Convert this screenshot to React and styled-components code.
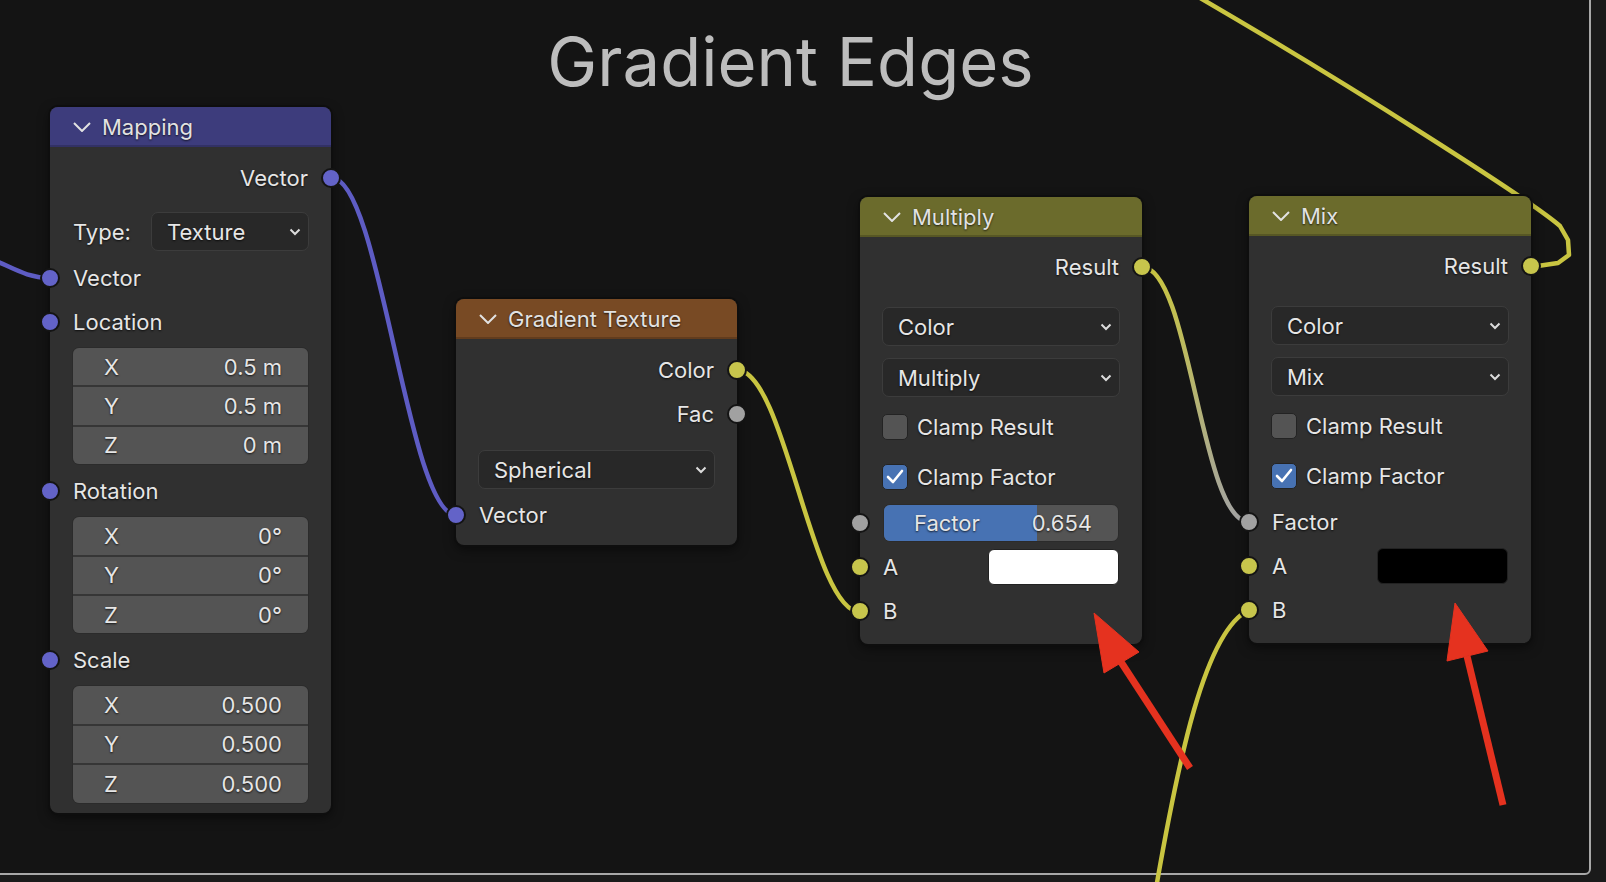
import React from 'react';
import styled, { createGlobalStyle } from 'styled-components';

const GlobalStyle = createGlobalStyle`
  html, body {
    margin: 0;
    padding: 0;
    background: #1a1a1a;
  }
  body {
    font-family: Inter, "Noto Sans", "Liberation Sans", sans-serif;
    overflow: hidden;
  }
`;

const Canvas = styled.div`
  position: relative;
  width: 1606px;
  height: 882px;
  overflow: hidden;
  background: #1a1a1a;
`;

// frame node, only its right and bottom edges are on screen
const Frame = styled.div`
  position: absolute;
  left: -4px;
  top: -4px;
  width: 1595px;
  height: 879px;
  box-sizing: border-box;
  border: 2px solid #a8a8a8;
  border-radius: 0 0 6px 0;
  background: #141414;
`;

const FrameLabel = styled.div`
  padding-top: 30px;
  padding-right: 6px;
  text-align: center;
  font-size: 67px;
  line-height: 1;
  color: #bdbdbd;
`;

const Layer = styled.svg`
  position: absolute;
  left: 0;
  top: 0;
  width: 1606px;
  height: 882px;
  pointer-events: none;
  z-index: ${p => p.$z};
`;

const NodeBox = styled.div`
  position: absolute;
  left: ${p => p.$x}px;
  top: ${p => p.$y}px;
  width: ${p => p.$w}px;
  z-index: 2;
  background: #303030;
  border-radius: 8px;
  box-shadow: 0 0 0 2px #0e0e0e, 0 4px 12px rgba(0, 0, 0, 0.55);
  color: #e6e6e6;
  font-size: 22px;
  text-shadow: 0 1px 2px rgba(0, 0, 0, 0.75);
`;

const Header = styled.div`
  height: 40px;
  display: flex;
  align-items: center;
  gap: 11px;
  padding-left: 23px;
  background: ${p => p.$color};
  border-radius: 8px 8px 0 0;
  box-shadow: inset 0 -2px 0 rgba(0, 0, 0, 0.18);
  color: #e2e2e2;
`;

const Body = styled.div`
  display: flex;
  flex-direction: column;
  padding: ${p => p.$pt}px 22px ${p => p.$pb}px;
`;

const SocketRow = styled.div`
  position: relative;
  height: 44px;
  flex: none;
  margin-top: ${p => p.$mt || 0}px;
  display: flex;
  align-items: center;
  gap: 12px;
  justify-content: ${p => (p.$out ? 'flex-end' : 'space-between')};
  padding: 0 1px;
`;

const Socket = styled.span`
  position: absolute;
  top: 50%;
  ${p => (p.$out ? 'right: -32px;' : 'left: -32px;')}
  width: 16px;
  height: 16px;
  border-radius: 50%;
  background: ${p => p.$color};
  border: 2px solid #141414;
  transform: translateY(-50%);
`;

const TypeRow = styled.div`
  display: flex;
  align-items: center;
  margin: 12px 0 5px;
  padding-left: 1px;
`;

const TypeLabel = styled.span`
  width: 78px;
  flex: none;
`;

const Dropdown = styled.div`
  flex: ${p => (p.$grow ? '1 1 auto' : 'none')};
  height: 39px;
  box-sizing: border-box;
  margin-top: ${p => p.$mt || 0}px;
  display: flex;
  align-items: center;
  justify-content: space-between;
  padding: 0 7px 0 15px;
  background: #282828;
  border: 1px solid #3c3c3c;
  border-radius: 7px;
`;

const VecBox = styled.div`
  flex: none;
  margin-top: 3px;
  display: flex;
  flex-direction: column;
  gap: 2px;
  background: #363636;
  border: 1px solid #2b2b2b;
  border-radius: 7px;
  overflow: hidden;
`;

const VecField = styled.div`
  height: 37.4px;
  display: flex;
  align-items: center;
  justify-content: space-between;
  padding: 0 26px 0 31px;
  background: #545454;
`;

const CheckRow = styled.div`
  flex: none;
  height: 48px;
  margin-top: ${p => p.$mt}px;
  display: flex;
  align-items: center;
  gap: 9px;
`;

const CheckBox = styled.span`
  width: 26px;
  height: 26px;
  box-sizing: border-box;
  display: flex;
  align-items: center;
  justify-content: center;
  background: ${p => (p.$on ? '#4772b3' : '#545454')};
  border: 1px solid #232323;
  border-radius: 5px;
`;

const Slider = styled.div`
  position: relative;
  flex: 1;
  height: 38px;
  box-sizing: border-box;
  display: flex;
  align-items: center;
  justify-content: space-between;
  padding: 0 26px 0 30px;
  background: #545454;
  border: 1px solid #2b2b2b;
  border-radius: 7px;
  overflow: hidden;
`;

const SliderFill = styled.div`
  position: absolute;
  left: 0;
  top: 0;
  bottom: 0;
  background: #4772b3;
`;

const SliderText = styled.span`
  position: relative;
`;

const Swatch = styled.span`
  width: 131px;
  height: 36px;
  box-sizing: border-box;
  background: ${p => p.$color};
  border: 1px solid #222;
  border-radius: 6px;
`;

const VECTOR = '#6363c8';
const COLOR = '#c7c54c';
const GRAY = '#a1a1a1';

function Chevron({ size = 'big' }) {
  if (size === 'big') {
    return (
      <svg width="18" height="10" viewBox="0 0 18 10">
        <polyline points="1,1 9,9 17,1" fill="none" stroke="#e2e2e2" strokeWidth="2" />
      </svg>
    );
  }
  return (
    <svg width="12" height="8" viewBox="0 0 12 8">
      <polyline points="1.5,1.5 6,6 10.5,1.5" fill="none" stroke="#dcdcdc" strokeWidth="2" />
    </svg>
  );
}

function Select({ value, mt, grow }) {
  return (
    <Dropdown $mt={mt} $grow={grow}>
      <span>{value}</span>
      <Chevron size="small" />
    </Dropdown>
  );
}

function Output({ label, color, mt }) {
  return (
    <SocketRow $out $mt={mt}>
      {label}
      <Socket $out $color={color} />
    </SocketRow>
  );
}

function Input({ label, color, mt, children }) {
  return (
    <SocketRow $mt={mt}>
      <Socket $color={color} />
      {label}
      {children}
    </SocketRow>
  );
}

function Vec({ fields }) {
  return (
    <VecBox>
      {fields.map(([k, v]) => (
        <VecField key={k}>
          <span>{k}</span>
          <span>{v}</span>
        </VecField>
      ))}
    </VecBox>
  );
}

function Check({ label, on, mt }) {
  return (
    <CheckRow $mt={mt}>
      <CheckBox $on={on}>
        {on && (
          <svg width="18" height="16" viewBox="0 0 18 16">
            <polyline points="2,8 7,13 16,2" fill="none" stroke="#fff" strokeWidth="2.6" strokeLinecap="round" strokeLinejoin="round" />
          </svg>
        )}
      </CheckBox>
      {label}
    </CheckRow>
  );
}

function Node({ x, y, w, color, title, pt, pb, children }) {
  return (
    <NodeBox $x={x} $y={y} $w={w}>
      <Header $color={color}>
        <Chevron />
        {title}
      </Header>
      <Body $pt={pt} $pb={pb}>
        {children}
      </Body>
    </NodeBox>
  );
}

function MixNode({ x, y, title, mode, factor, swatch }) {
  return (
    <Node x={x} y={y} w={282} color="#6b6b2c" title={title} pt={8} pb={11}>
      <Output label="Result" color={COLOR} />
      <Select value="Color" mt={18} />
      <Select value={mode} mt={12} />
      <Check label="Clamp Result" mt={6} />
      <Check label="Clamp Factor" on mt={2} />
      {factor !== undefined ? (
        <SocketRow>
          <Socket $color={GRAY} />
          <Slider>
            <SliderFill style={{ width: `${factor * 100}%` }} />
            <SliderText>Factor</SliderText>
            <SliderText>{factor.toFixed(3)}</SliderText>
          </Slider>
        </SocketRow>
      ) : (
        <Input label="Factor" color={GRAY} />
      )}
      <Input label="A" color={COLOR}>
        <Swatch $color={swatch} />
      </Input>
      <Input label="B" color={COLOR} />
    </Node>
  );
}

function Wires() {
  return (
    <Layer $z={1} viewBox="0 0 1606 882">
      <defs>
        <linearGradient id="fadeWire" gradientUnits="userSpaceOnUse" x1="0" y1="267" x2="0" y2="522">
          <stop offset="0" stopColor="#c9c541" />
          <stop offset="1" stopColor="#a3a3a3" />
        </linearGradient>
      </defs>
      <g fill="none" strokeWidth="4.5" strokeLinecap="round">
        <path d="M -10 259 C 12 266, 22 277, 50 278" stroke="#5e5cc4" />
        <path d="M 332 178 C 380 178, 408 515, 456 515" stroke="#5e5cc4" />
        <path d="M 737 370 C 785 370, 812 612, 860 612" stroke="#c9c541" />
        <path d="M 1142 267 C 1190 267, 1201 522, 1249 522" stroke="url(#fadeWire)" />
        <path d="M 1154 900 C 1178 760, 1205 630, 1249 610" stroke="#c9c541" />
        <path
          d="M 1531 267 L 1558 263 L 1569 255 L 1568 240 L 1560 226 C 1530 200, 1350 85, 1195 -5"
          stroke="#c9c541"
          strokeLinejoin="round"
        />
      </g>
    </Layer>
  );
}

function Arrows() {
  return (
    <Layer $z={3} viewBox="0 0 1606 882">
      <g fill="#e5321f" stroke="#e5321f">
        <line x1="1121" y1="662" x2="1190" y2="768" strokeWidth="7" />
        <polygon points="1094,613 1104,673 1139,652" strokeWidth="1" />
        <line x1="1467" y1="656" x2="1503" y2="805" strokeWidth="7" />
        <polygon points="1455,603 1447,661 1488,651" strokeWidth="1" />
      </g>
    </Layer>
  );
}

export default function App() {
  return (
    <Canvas>
      <GlobalStyle />
      <Frame>
        <FrameLabel>Gradient Edges</FrameLabel>
      </Frame>
      <Wires />

      <Node x={50} y={107} w={281} color="#3d3c7c" title="Mapping" pt={9} pb={9}>
        <Output label="Vector" color={VECTOR} />
        <TypeRow>
          <TypeLabel>Type:</TypeLabel>
          <Select value="Texture" grow />
        </TypeRow>
        <Input label="Vector" color={VECTOR} />
        <Input label="Location" color={VECTOR} />
        <Vec fields={[['X', '0.5 m'], ['Y', '0.5 m'], ['Z', '0 m']]} />
        <Input label="Rotation" color={VECTOR} mt={4} />
        <Vec fields={[['X', '0°'], ['Y', '0°'], ['Z', '0°']]} />
        <Input label="Scale" color={VECTOR} mt={4} />
        <Vec fields={[['X', '0.500'], ['Y', '0.500'], ['Z', '0.500']]} />
      </Node>

      <Node x={456} y={299} w={281} color="#784a24" title="Gradient Texture" pt={9} pb={8}>
        <Output label="Color" color={COLOR} />
        <Output label="Fac" color={GRAY} />
        <Select value="Spherical" mt={14} />
        <Input label="Vector" color={VECTOR} mt={4} />
      </Node>

      <MixNode x={860} y={197} title="Multiply" mode="Multiply" factor={0.654} swatch="#ffffff" />
      <MixNode x={1249} y={196} title="Mix" mode="Mix" swatch="#000000" />

      <Arrows />
    </Canvas>
  );
}
